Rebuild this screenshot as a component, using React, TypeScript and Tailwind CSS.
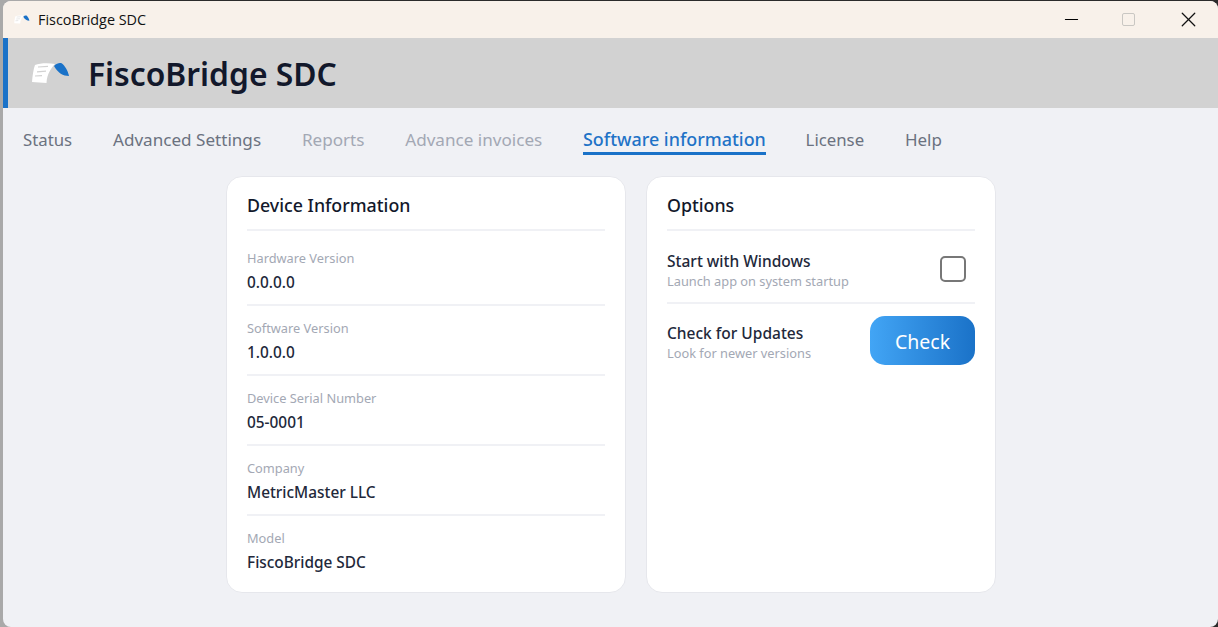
import { X, Minus } from "lucide-react";

const tabs = [
  { label: "Status", color: "text-[16.8px] text-[#6b7280]" },
  { label: "Advanced Settings", color: "text-[17.1px] text-[#6b7280]" },
  { label: "Reports", color: "text-[17.1px] text-[#a3a8b4]" },
  { label: "Advance invoices", color: "text-[17.1px] text-[#a3a8b4]" },
  { label: "Software information", color: "-mr-px text-[17.9px] text-[#1f73c7] font-medium", active: true },
  { label: "License", color: "text-[16.8px] text-[#6b7280]" },
  { label: "Help", color: "text-[17px] text-[#6b7280]" },
];

const deviceRows = [
  { label: "Hardware Version", value: "0.0.0.0" },
  { label: "Software Version", value: "1.0.0.0" },
  { label: "Device Serial Number", value: "05-0001" },
  { label: "Company", value: "MetricMaster LLC" },
  { label: "Model", value: "FiscoBridge SDC" },
];

const Logo = ({ className }: { className: string }) => (
  <svg viewBox="0 0 38 22" className={className}>
    <path d="M3 3 C8 1 16 0.5 23 2 C19 6 15 12 14.5 21 L0 20 C0.5 13 1.5 7 3 3 Z" fill="#ffffff" />
    <path d="M6 5 L16 4.4 M5 9.8 L14 9.2 M3 14 L10 13.6" stroke="#d2d2d2" strokeWidth="1.2" fill="none" />
    <path d="M22 4 C25 1 28 0.5 30 1.5 C33 4 36 9 37 14 C31 14 26 11 22 4 Z" fill="#1a72c8" />
  </svg>
);

export default function App() {
  return (
    <div className="h-[627px] w-[1218px] overflow-hidden bg-[linear-gradient(to_right,#a9a9a9_90px,#2b2b2b_90px)] pl-[3px] pt-px font-['Noto_Sans',sans-serif]">
      <div className="flex h-[626px] flex-col overflow-hidden rounded-[8px] bg-[#f0f1f5]">
        {/* Title bar */}
        <div className="flex h-[37px] shrink-0 items-center bg-[#f8f1ea] pl-[11px]">
          <Logo className="h-[9px] w-[16px]" />
          <span className="ml-[8px] font-['Open_Sans',sans-serif] text-[14.4px] text-[#111111]">FiscoBridge SDC</span>
          <div className="ml-auto flex items-center">
            <Minus size={21} strokeWidth={1.2} className="mr-[40px] text-black" />
            <div className="mr-[41px] h-[13px] w-[13px] rounded-[2px] border border-[#c9c7c3]" />
            <X size={25} strokeWidth={1.2} className="mr-[17px] text-[#111111]" />
          </div>
        </div>

        {/* Header */}
        <div className="flex h-[70px] shrink-0 items-center border-l-[5px] border-[#1a72c8] bg-[#d2d2d2] pl-[24px]">
          <Logo className="h-[22px] w-[38px]" />
          <h1 className="ml-[18px] pt-[2px] text-[31.8px] font-semibold text-[#12182b]">FiscoBridge SDC</h1>
        </div>

        {/* Tabs */}
        <div className="flex h-[68px] shrink-0 items-start gap-[40.8px] pl-[20px] pt-[19px]">
          {tabs.map((tab) => (
            <div key={tab.label} className={`border-b-[3px] leading-[25px] ${tab.active ? "border-[#1a72c8]" : "border-transparent"} ${tab.color}`}>
              {tab.label}
            </div>
          ))}
        </div>

        {/* Cards */}
        <div className="ml-[223px] flex gap-[20px]">
          <div className="h-[417px] w-[400px] rounded-[16px] border border-[#e6e7ec] bg-white px-[20px]">
            <h2 className="flex h-[54px] items-center border-b-2 border-[#f0f1f5] pt-[4px] text-[17.8px] font-medium text-[#12182b]">Device Information</h2>
            <div className="mt-[5px]">
              {deviceRows.map((row, i) => (
                <div key={row.label} className={`h-[70px] pt-[12px] ${i < 4 ? "border-b-2 border-[#f0f1f5]" : ""}`}>
                  <div className="text-[12.8px] leading-[20px] text-[#a3a8b4]">{row.label}</div>
                  <div className="mt-[4px] text-[15.4px] font-medium leading-[22px] text-[#22283a]">{row.value}</div>
                </div>
              ))}
            </div>
          </div>

          <div className="h-[417px] w-[350px] rounded-[16px] border border-[#e6e7ec] bg-white px-[20px]">
            <h2 className="flex h-[54px] items-center border-b-2 border-[#f0f1f5] pt-[4px] text-[17.8px] font-medium text-[#12182b]">Options</h2>
            <div className="flex h-[73px] items-center justify-between border-b-2 border-[#f0f1f5]">
              <div className="pt-[7px]">
                <div className="text-[15.5px] font-medium leading-[22px] text-[#22283a]">Start with Windows</div>
                <div className="-mt-[1px] text-[12.8px] leading-[20px] text-[#a3a8b4]">Launch app on system startup</div>
              </div>
              <div className="mr-[9px] mt-[4px] h-[26px] w-[26px] rounded-[5px] border-2 border-[#777777] bg-white" />
            </div>
            <div className="flex h-[76px] items-center justify-between">
              <div className="pt-[1px]">
                <div className="text-[15.5px] font-medium leading-[22px] text-[#22283a]">Check for Updates</div>
                <div className="-mt-[1px] text-[12.8px] leading-[20px] text-[#a3a8b4]">Look for newer versions</div>
              </div>
              <button className="-mt-[3px] h-[49px] w-[105px] rounded-[15px] bg-gradient-to-r from-[#42a5f5] to-[#1a72c8] pt-[2px] text-[19.5px] text-white">Check</button>
            </div>
          </div>
        </div>
      </div>
    </div>
  );
}
